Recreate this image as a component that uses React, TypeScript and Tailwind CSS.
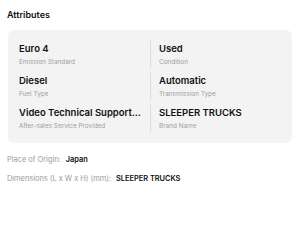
import React from "react";

type Attr = { value: string; label: string };

const attrs: Attr[] = [
  { value: "Euro 4", label: "Emission Standard" },
  { value: "Used", label: "Condition" },
  { value: "Diesel", label: "Fuel Type" },
  { value: "Automatic", label: "Transmission Type" },
  { value: "Video Technical Support, Online Support", label: "After-sales Service Provided" },
  { value: "SLEEPER TRUCKS", label: "Brand Name" },
];

function AttrCell({ a, right }: { a: Attr; right: boolean }) {
  return (
    <div className={right ? "flex min-w-0" : "flex min-w-0 pr-2"}>
      {right && <div className="w-px bg-[#dcdcdc] mr-2 my-[-2px]" />}
      <div className="min-w-0 flex flex-col">
        <div className="text-[9.5px] leading-[12px] font-semibold text-[#111] truncate">{a.value}</div>
        <div className="text-[6.4px] leading-[8px] text-[#a0a0a0] mt-[3px] truncate">{a.label}</div>
      </div>
    </div>
  );
}

export default function App() {
  return (
    <div className="w-[300px] h-[242px] bg-white font-['Inter',sans-serif] pt-[9px]">
      <div className="px-[7px] text-[9px] leading-[12px] font-semibold text-[#111]">Attributes</div>
      <div className="mx-2 mt-[9px] bg-[#f3f3f3] rounded-[6px] pt-[13px] pb-[13px] pl-[11px] pr-[11px]">
        <div className="grid grid-cols-2 gap-y-[9px]">
          {attrs.map((a, i) => (
            <AttrCell key={i} a={a} right={i % 2 === 1} />
          ))}
        </div>
      </div>
      <div className="px-[7px] mt-[12px] flex flex-col gap-[9px] text-[7.4px] leading-[10px]">
        <div className="flex gap-[5px]">
          <span className="text-[#9a9a9a]">Place of Origin:</span>
          <span className="font-semibold text-[#111]">Japan</span>
        </div>
        <div className="flex gap-[5px]">
          <span className="text-[#9a9a9a]">Dimensions (L x W x H) (mm):</span>
          <span className="font-semibold text-[#111]">SLEEPER TRUCKS</span>
        </div>
      </div>
    </div>
  );
}
